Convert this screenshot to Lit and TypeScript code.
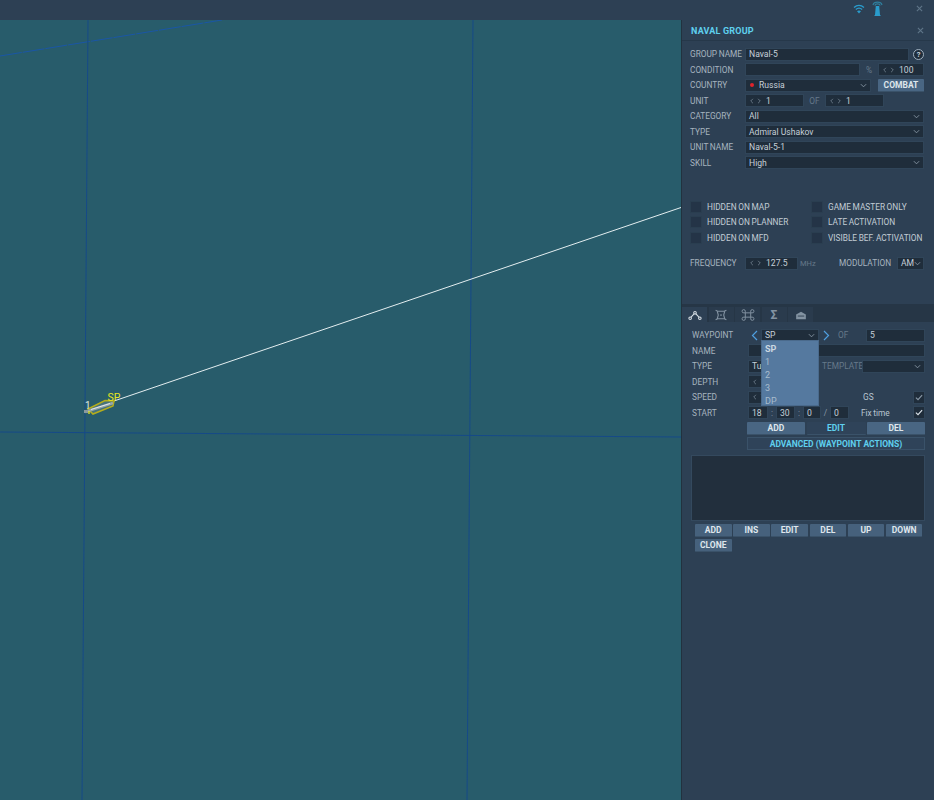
import { LitElement, css, html, svg } from "lit";
import { customElement } from "lit/decorators.js";

const caret = html`<svg class="caret" viewBox="0 0 8 5"><path d="M1 1l3 3 3-3" fill="none" stroke="currentColor" stroke-width="1"/></svg>`;
const arrows = html`<svg class="arrows" viewBox="0 0 15 8"><path d="M4 1L1 4l3 3M11 1l3 3-3 3" fill="none" stroke="currentColor" stroke-width="1"/></svg>`;
const closeX = html`<svg class="x" viewBox="0 0 8 8"><path d="M1 1l6 6M7 1L1 7" stroke="currentColor" stroke-width="1.3"/></svg>`;
const tick = html`<svg viewBox="0 0 9 8" class="tick"><path d="M1 4l2.4 2.4L8 1.2" fill="none" stroke="currentColor" stroke-width="1.2"/></svg>`;

@customElement("app-root")
export class AppRoot extends LitElement {
  static styles = css`
    :host {
      display: block;
      width: 934px;
      height: 800px;
      overflow: hidden;
      font-family: "Roboto", sans-serif;
      font-size: 8.3px;
      word-spacing: -0.5px;
      color: #b9c5d0;
      background: #2d4054;
    }
    .top {
      height: 20px;
      display: flex;
      justify-content: flex-end;
      align-items: flex-start;
      background: #2d4054;
      padding: 5px 11px 0 0;
      box-sizing: border-box;
      color: #5f7588;
    }
    .wifi { width: 12px; height: 10px; margin: -1px 7px 0 0; }
    .tower { width: 11px; height: 15px; margin: -4px 33px 0 0; }
    .x { width: 7px; height: 7px; color: #5f7588; }
    .main { display: flex; height: 780px; }
    .map { width: 681px; flex: none; background: #285c6b; position: relative; overflow: hidden; }
    .map svg { position: absolute; left: 0; top: -20px; width: 681px; height: 800px; }
    .panel { width: 252px; border-left: 1px solid #22323f; background: #2d4054; position: relative; }
    .head {
      height: 20px;
      border-bottom: 1px solid #26384a;
      display: flex;
      align-items: center;
      justify-content: space-between;
      padding: 0 10px 0 9px;
      color: #5fd0ee;
      font-weight: 700;
      font-size: 9px;
      word-spacing: 0;
      letter-spacing: 0.2px;
    }
    .head span { padding-top: 1px; }
    .form { padding: 5.5px 10px 0 8px; }
    .row { display: flex; align-items: center; height: 15.5px; }
    .lbl { width: 55px; flex: none; white-space: nowrap; color: #a6b3bf; }
    .in {
      height: 13px;
      box-sizing: border-box;
      background: #1f2d3b;
      border: 1px solid #304559;
      display: flex;
      align-items: center;
      padding: 0 3px;
      color: #c6d0d9;
      font-size: 8.6px;
      white-space: nowrap;
      word-spacing: 0;
      flex: none;
    }
    .caret { width: 7px; height: 5px; margin-left: auto; color: #8b9aa8; flex: none; }
    .arrows { width: 11px; height: 6px; margin: 0 5px 0 1px; color: #7e8d9b; flex: none; }
    .help {
      width: 11px; height: 11px; margin-left: 4px; border-radius: 50%;
      border: 1px solid #9fb0bf; box-sizing: border-box; background: #1f2d3b;
      display: flex; align-items: center; justify-content: center;
      font-size: 7.5px; font-weight: 700; color: #cdd6de;
    }
    .unit { color: #66798a; flex: none; }
    .dot { width: 4px; height: 4px; border-radius: 50%; background: #e0232b; margin: 0 5px 0 1px; }
    .btn {
      height: 13px;
      box-sizing: border-box;
      background: #496683;
      border-radius: 1px;
      border-bottom: 1px solid #3a5269;
      display: flex; align-items: center; justify-content: center;
      color: #dfe6ec;
      font-size: 8.5px;
      font-weight: 700;
      flex: none;
    }
    .checks {
      display: grid;
      grid-template-columns: 121px 1fr;
      grid-auto-rows: 15.5px;
      margin-top: 28.5px;
    }
    .chk { display: flex; align-items: center; color: #c2ccd5; white-space: nowrap; }
    .box { width: 12px; height: 12px; box-sizing: border-box; background: #243447; border: 1px solid #2a3e50; margin-right: 5px; flex: none; }
    .tabs-wrap { margin-top: 33px; background: #2a3b4d; height: 257px; }
    .tabs { display: flex; height: 18px; box-sizing: border-box; padding-top: 3px; background: #263646; gap: 1.5px; }
    .tab {
      width: 25px; display: flex; align-items: center; justify-content: center;
      background: #2a3b4d; color: #8393a2;
    }
    .tab.on { background: #2d4054; color: #d5dde4; }
    .tab svg { width: 14px; height: 12px; }
    .tab span { font-size: 12px; font-weight: 700; line-height: 1; }
    .wp { background: #2d4054; height: 239px; padding: 5.5px 9px 0 10px; position: relative; }
    .wp .lbl { width: 56px; }
    .nav { width: 7px; height: 11px; color: #4f9fe0; flex: none; }
    .drop {
      position: absolute;
      left: 79px; top: 18px;
      width: 58px; height: 66px;
      box-sizing: border-box;
      background: #55799f;
      border: 1px solid #4a6a8c;
      color: #a9bccd;
      font-size: 9px;
      padding-top: 1.5px;
      z-index: 2;
    }
    .drop div { height: 13px; line-height: 12.5px; padding-left: 3px; }
    .drop .sel { font-weight: 700; color: #cbd7e1; }
    .sep { text-align: center; color: #8b9aa8; flex: none; }
    .cyan { color: #5fd0ee; }
    .dark { background: #2f4359; }
    .adv {
      margin: 1px 0 0 55px;
      height: 13px; box-sizing: border-box;
      background: #2f4359; border: 1px solid #3a5269;
      color: #5fd0ee; font-size: 8.5px; font-weight: 700;
      word-spacing: 0;
      display: flex; align-items: center; justify-content: center;
    }
    .list {
      margin: 4.5px 0 0 -1px;
      height: 66px; box-sizing: border-box;
      background: #222f3d; border: 1px solid #34495e;
    }
    .btns {
      display: grid;
      grid-template-columns: repeat(6, 36.5px);
      grid-auto-rows: 13.5px;
      column-gap: 1.7px;
      row-gap: 1.5px;
      margin: 3px 0 0 3px;
    }
    .btns .btn { height: 13.5px; background: #46617c; }
  `;

  renderMap() {
    return svg`
      <line x1="0" y1="56" x2="222" y2="20" stroke="#1a56a6" stroke-width="1" stroke-dasharray="22 1"/>
      <line x1="88" y1="20" x2="82" y2="800" stroke="#164a88" stroke-width="1"/>
      <line x1="473" y1="20" x2="467" y2="800" stroke="#164a88" stroke-width="1"/>
      <line x1="0" y1="432" x2="681" y2="437" stroke="#164a88" stroke-width="1"/>
      <line x1="114" y1="401" x2="681" y2="207.500" stroke="#e4eef0" stroke-width="1"/>
      <path d="M88 409L105 400.500 114 401 113 406 93 414Z" fill="#46727c" stroke="#b5ad1c" stroke-width="1.500"/>
      <path d="M85 412L113 403" stroke="#98a8ab" stroke-width="2.500"/>
      <path d="M91 409.500L110 403.500" stroke="#e4e8e8" stroke-width="1"/>
      <rect x="84" y="410" width="4" height="3" fill="#8a9a9e"/>
      <path d="M89 411v3" stroke="#e6e61e" stroke-width="1.300"/>
      <text x="107.500" y="401" font-size="10.500" fill="#e6e61e" font-family="Roboto, sans-serif">SP</text>
      <text x="85" y="409" font-size="10" fill="#dfe8e0" font-family="Roboto, sans-serif">1</text>
    `;
  }

  render() {
    return html`
      <div class="top">
        <svg class="wifi" viewBox="0 0 12 10">
          <path d="M1 3.500C4 .8 8 .8 11 3.500M2.800 5.500C4.800 3.800 7.200 3.800 9.200 5.500" fill="none" stroke="#2a9ccc" stroke-width="1.300"/>
          <path d="M4 7.200C5.300 6.200 6.700 6.200 8 7.200L6 9.500Z" fill="#2a9ccc"/>
        </svg>
        <svg class="tower" viewBox="0 0 11 15">
          <path d="M1 4C2 .3 9 .3 10 4M2.800 4.500C3.500 2.300 7.500 2.300 8.200 4.500" fill="none" stroke="#2f7f9e" stroke-width="1.200"/>
          <path d="M3.800 5h3.400l.8 9H3Z" fill="#2a9ccc"/>
          <path d="M2.500 14.500h6" stroke="#2a9ccc" stroke-width="1"/>
        </svg>
        ${closeX}
      </div>
      <div class="main">
        <div class="map"><svg viewBox="0 0 681 800">${this.renderMap()}</svg></div>
        <div class="panel">
          <div class="head"><span>NAVAL GROUP</span>${closeX}</div>
          <div class="form">
            <div class="row">
              <span class="lbl">GROUP NAME</span>
              <div class="in" style="width:164px">Naval-5</div>
              <div class="help">?</div>
            </div>
            <div class="row">
              <span class="lbl">CONDITION</span>
              <div class="in" style="width:115px"></div>
              <span class="unit" style="width:18px;text-align:center">%</span>
              <div class="in" style="width:46px">${arrows}100</div>
            </div>
            <div class="row">
              <span class="lbl">COUNTRY</span>
              <div class="in" style="width:126px"><span class="dot"></span>Russia${caret}</div>
              <div class="btn" style="width:46px;margin-left:7px">COMBAT</div>
            </div>
            <div class="row">
              <span class="lbl">UNIT</span>
              <div class="in" style="width:59px">${arrows}1</div>
              <span class="unit" style="width:21px;text-align:center">OF</span>
              <div class="in" style="width:59px">${arrows}1</div>
            </div>
            <div class="row">
              <span class="lbl">CATEGORY</span>
              <div class="in" style="width:179px">All${caret}</div>
            </div>
            <div class="row">
              <span class="lbl">TYPE</span>
              <div class="in" style="width:179px">Admiral Ushakov${caret}</div>
            </div>
            <div class="row">
              <span class="lbl">UNIT NAME</span>
              <div class="in" style="width:179px">Naval-5-1</div>
            </div>
            <div class="row">
              <span class="lbl">SKILL</span>
              <div class="in" style="width:179px">High${caret}</div>
            </div>
            <div class="checks">
              <div class="chk"><span class="box"></span>HIDDEN ON MAP</div>
              <div class="chk"><span class="box"></span>GAME MASTER ONLY</div>
              <div class="chk"><span class="box"></span>HIDDEN ON PLANNER</div>
              <div class="chk"><span class="box"></span>LATE ACTIVATION</div>
              <div class="chk"><span class="box"></span>HIDDEN ON MFD</div>
              <div class="chk"><span class="box"></span>VISIBLE BEF. ACTIVATION</div>
            </div>
            <div class="row" style="margin-top:10px">
              <span class="lbl">FREQUENCY</span>
              <div class="in" style="width:53px">${arrows}127.5</div>
              <span class="unit" style="width:39px;margin-left:2px;font-size:7.5px">MHz</span>
              <span class="lbl" style="width:58px">MODULATION</span>
              <div class="in" style="width:27px">AM${caret}</div>
            </div>
          </div>
          <div class="tabs-wrap">
            <div class="tabs">
              <div class="tab on">
                <svg viewBox="0 0 13 11"><path d="M2 8.500L6.500 3.500 11 8.500" fill="none" stroke="currentColor" stroke-width="1"/><circle cx="2" cy="8.500" r="1.200" fill="#2d4054" stroke="currentColor"/><circle cx="6.500" cy="3.500" r="1.200" fill="#2d4054" stroke="currentColor"/><circle cx="11" cy="8.500" r="1.200" fill="#2d4054" stroke="currentColor"/></svg>
              </div>
              <div class="tab">
                <svg viewBox="0 0 13 11"><path d="M3 2h7l-1 3.500L10 9H3l1-3.500ZM1.500 1l2 1M11.500 1l-2 1M1.500 10l2-1M11.500 10l-2-1" fill="none" stroke="currentColor" stroke-width="1"/><circle cx="6.500" cy="5.500" r=".8" fill="currentColor"/></svg>
              </div>
              <div class="tab">
                <svg viewBox="0 0 13 11"><path d="M4 3.500h5v4H4ZM4 3.500H2.700a1.500 1.500 0 1 1 1.300-1.500ZM9 3.500h1.300A1.500 1.500 0 1 0 9 2ZM4 7.500H2.700A1.500 1.500 0 1 0 4 9ZM9 7.500h1.300A1.500 1.500 0 1 1 9 9Z" fill="none" stroke="currentColor" stroke-width=".9"/></svg>
              </div>
              <div class="tab"><span>Σ</span></div>
              <div class="tab">
                <svg viewBox="0 0 13 11"><path d="M2 9.500V5L6.500 2.500 11 5v4.500Z" fill="currentColor"/><path d="M3.500 6.500h6" stroke="#2a3b4d" stroke-width=".8"/></svg>
              </div>
            </div>
            <div class="wp">
              <div class="row">
                <span class="lbl">WAYPOINT</span>
                <svg class="nav" style="margin-left:3px" viewBox="0 0 7 11"><path d="M6 1L1.500 5.500 6 10" fill="none" stroke="currentColor" stroke-width="1.200"/></svg>
                <div class="in" style="width:58px;margin-left:3px">SP${caret}</div>
                <svg class="nav" style="margin-left:4px" viewBox="0 0 7 11"><path d="M1 1l4.500 4.500L1 10" fill="none" stroke="currentColor" stroke-width="1.200"/></svg>
                <span class="unit" style="width:28px;margin-left:8px">OF</span>
                <div class="in" style="width:59px">5</div>
              </div>
              <div class="row">
                <span class="lbl">NAME</span>
                <div class="in" style="width:177px"></div>
              </div>
              <div class="row">
                <span class="lbl">TYPE</span>
                <div class="in" style="width:70px">Tu</div>
                <span class="unit" style="width:40px;margin-left:4px">TEMPLATE</span>
                <div class="in" style="width:63px">${caret}</div>
              </div>
              <div class="row">
                <span class="lbl">DEPTH</span>
                <div class="in" style="width:50px">${arrows}</div>
              </div>
              <div class="row">
                <span class="lbl">SPEED</span>
                <div class="in" style="width:50px">${arrows}</div>
                <span style="margin-left:65px;width:50px;flex:none">GS</span>
                <div class="in" style="width:12px;padding:0 1px;color:#8b9aa8">${tick}</div>
              </div>
              <div class="row">
                <span class="lbl">START</span>
                <div class="in" style="width:20px;padding:0 3px">18</div>
                <span class="sep" style="width:8px">:</span>
                <div class="in" style="width:19px;padding:0 3px">30</div>
                <span class="sep" style="width:8px">:</span>
                <div class="in" style="width:18px;padding:0 3px">0</div>
                <span class="sep" style="width:9px">/</span>
                <div class="in" style="width:19px;padding:0 3px">0</div>
                <span style="margin-left:12px;width:52px;flex:none">Fix time</span>
                <div class="in" style="width:12px;padding:0 1px;color:#dfe6ec">${tick}</div>
              </div>
              <div class="row" style="padding-left:55px;gap:1.500px">
                <div class="btn" style="width:58px">ADD</div>
                <div class="btn dark cyan" style="width:59px">EDIT</div>
                <div class="btn" style="width:58px">DEL</div>
              </div>
              <div class="adv">ADVANCED (WAYPOINT ACTIONS)</div>
              <div class="list"></div>
              <div class="btns">
                ${["ADD", "INS", "EDIT", "DEL", "UP", "DOWN", "CLONE"].map(
                  (b) => html`<div class="btn">${b}</div>`,
                )}
              </div>
              <div class="drop">
                <div class="sel">SP</div>
                <div>1</div>
                <div>2</div>
                <div>3</div>
                <div>DP</div>
              </div>
            </div>
          </div>
        </div>
      </div>
    `;
  }
}
